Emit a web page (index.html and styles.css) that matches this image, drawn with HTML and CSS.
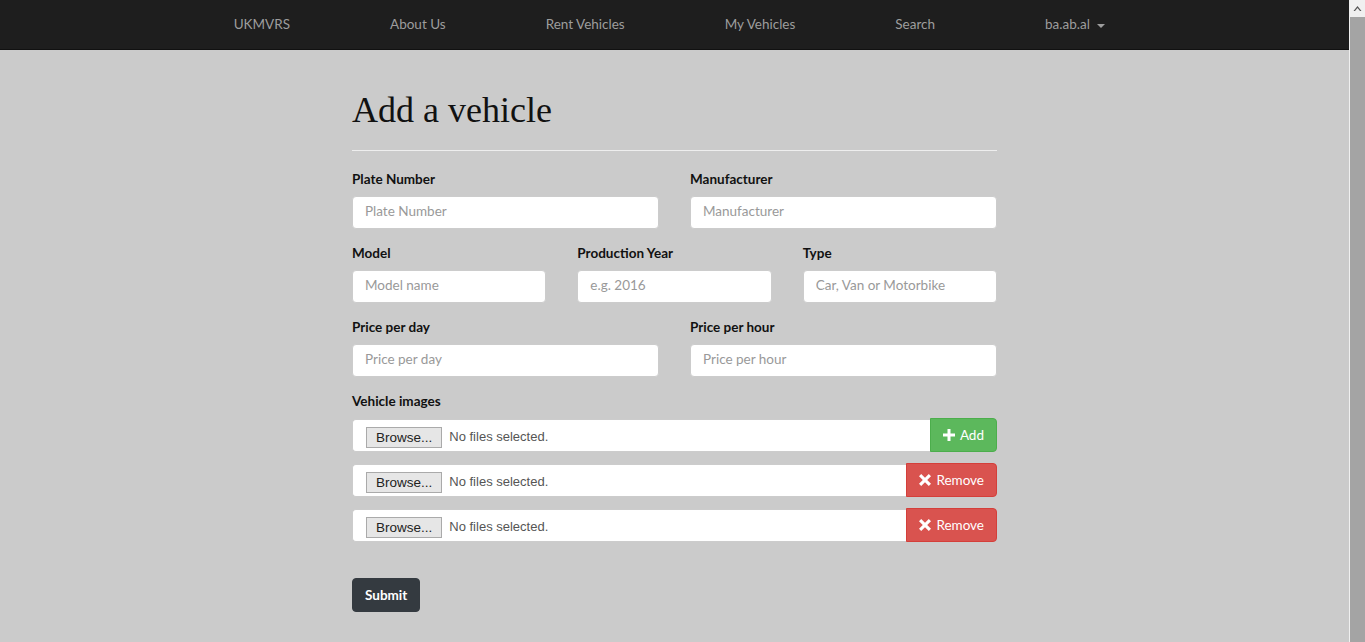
FILE: index.html
```html
<!DOCTYPE html>
<html>
<head>
<meta charset="utf-8">
<title>Add a vehicle</title>
<link rel="stylesheet" href="styles.css">
</head>
<body>
<div class="page">
  <nav class="navbar">
    <ul class="nav">
      <li><a href="#">UKMVRS</a></li>
      <li><a href="#">About Us</a></li>
      <li><a href="#">Rent Vehicles</a></li>
      <li><a href="#">My Vehicles</a></li>
      <li><a href="#">Search</a></li>
      <li class="user"><a href="#">ba.ab.al <span class="caret"></span></a></li>
    </ul>
  </nav>
  <main class="container">
    <h1 class="title">Add a vehicle</h1>
    <hr class="divider">
    <form class="form">
      <div class="row two">
        <div class="group"><label>Plate Number</label><input class="control" placeholder="Plate Number"></div>
        <div class="group"><label>Manufacturer</label><input class="control" placeholder="Manufacturer"></div>
      </div>
      <div class="row three">
        <div class="group"><label>Model</label><input class="control" placeholder="Model name"></div>
        <div class="group"><label>Production Year</label><input class="control" placeholder="e.g. 2016"></div>
        <div class="group"><label>Type</label><input class="control" placeholder="Car, Van or Motorbike"></div>
      </div>
      <div class="row two">
        <div class="group"><label>Price per day</label><input class="control" placeholder="Price per day"></div>
        <div class="group"><label>Price per hour</label><input class="control" placeholder="Price per hour"></div>
      </div>
      <div class="images">
        <label>Vehicle images</label>
        <div class="file-row">
          <div class="file"><span class="browse">Browse...</span><span class="none">No files selected.</span></div>
          <button type="button" class="btn add"><svg class="ico" viewBox="0 0 12 12"><path d="M4.5 0h3v4.5H12v3H7.5V12h-3V7.5H0v-3h4.5z" fill="#fff"/></svg>Add</button>
        </div>
        <div class="file-row">
          <div class="file"><span class="browse">Browse...</span><span class="none">No files selected.</span></div>
          <button type="button" class="btn remove"><svg class="ico" viewBox="0 0 12 12"><path d="M2.2 0L6 3.8 9.8 0 12 2.2 8.2 6 12 9.8 9.8 12 6 8.2 2.2 12 0 9.8 3.8 6 0 2.2z" fill="#fff"/></svg>Remove</button>
        </div>
        <div class="file-row">
          <div class="file"><span class="browse">Browse...</span><span class="none">No files selected.</span></div>
          <button type="button" class="btn remove"><svg class="ico" viewBox="0 0 12 12"><path d="M2.2 0L6 3.8 9.8 0 12 2.2 8.2 6 12 9.8 9.8 12 6 8.2 2.2 12 0 9.8 3.8 6 0 2.2z" fill="#fff"/></svg>Remove</button>
        </div>
      </div>
      <button type="submit" class="submit">Submit</button>
    </form>
  </main>
</div>
<div class="scrollbar" aria-hidden="true">
  <div class="sb-up"><svg viewBox="0 0 15 17" width="15" height="17"><path d="M3.5 11L7.5 6 11.5 11H10L7.5 8 5 11z" fill="#555"/></svg></div>
  <div class="sb-thumb"></div>
</div>
</body>
</html>
```
FILE: styles.css
```css
html, body {
  height: 100%;
  overflow: hidden;
}
body {
  margin: 0;
  display: flex;
  background: #cbcbcb;
  font-family: Lato, "Open Sans", sans-serif;
  font-size: 13.5px;
  line-height: 20px;
  color: #333;
}
.page {
  flex: 1;
  min-width: 0;
}
.scrollbar {
  width: 15px;
  border-left: 1px solid #f0f0f0;
  display: flex;
  flex-direction: column;
}
.sb-up {
  height: 17px;
  background: #f0f0f0;
}
.sb-up svg { display: block; }
.sb-thumb {
  flex: 1;
  background: #a4a4a4;
}
.navbar {
  background: #1e1e1e;
  height: 50px;
  border-bottom: 1px solid #111;
  box-sizing: border-box;
}
.nav {
  list-style: none;
  margin: 0;
  padding: 0 10px 0 0;
  display: flex;
  justify-content: center;
}
.nav .user { margin-left: 10px; }
.nav a {
  display: block;
  padding: 14px 50px;
  line-height: 20px;
  color: #9d9d9d;
  text-decoration: none;
}
.caret {
  display: inline-block;
  width: 0;
  height: 0;
  margin-left: 4px;
  vertical-align: middle;
  border-top: 4px solid #9d9d9d;
  border-left: 4px solid transparent;
  border-right: 4px solid transparent;
}
.container {
  width: 645px;
  margin: 0 auto;
}
.title {
  font-family: "Liberation Serif", "DejaVu Serif", serif;
  font-weight: normal;
  font-size: 36px;
  line-height: 40px;
  color: #111;
  margin: 40px 0 0;
}
.divider {
  border: 0;
  border-top: 1px solid #eee;
  margin: 20px 0 18px;
}
.row {
  display: grid;
  column-gap: 31px;
}
.row.two { grid-template-columns: 1fr 1fr; }
.row.three { grid-template-columns: 1fr 1fr 1fr; }
.group {
  margin-bottom: 14px;
}
label {
  display: block;
  font-weight: bold;
  color: #111;
  margin-bottom: 7px;
}
.control {
  display: block;
  box-sizing: border-box;
  width: 100%;
  height: 33px;
  padding: 4px 12px 7px;
  font: inherit;
  color: #555;
  background: #fff;
  border: 1px solid #ccc;
  border-radius: 4px;
  outline: none;
}
.control::placeholder { color: #999; }
.file-row {
  display: flex;
  height: 34px;
  margin-bottom: 11px;
}
.file {
  flex: 1;
  display: flex;
  align-items: center;
  background: #fff;
  border: 1px solid #ccc;
  border-right: 0;
  border-radius: 4px 0 0 4px;
  padding: 0 0 0 13px;
  height: 33px;
  box-sizing: border-box;
  margin-top: 1px;
  font-family: "Liberation Sans", Arial, sans-serif;
  font-size: 13px;
  color: #555;
}
.browse {
  display: inline-block;
  background: #e6e6e6;
  border: 1px solid #aaa;
  color: #222;
  font-size: 13.5px;
  padding: 0 9px;
  height: 19px;
  line-height: 19px;
  margin-right: 7px;
  margin-top: 3px;
}
.none { margin-top: 3px; }
.btn {
  display: flex;
  align-items: center;
  gap: 5px;
  height: 34px;
  padding: 0 12px;
  border: 1px solid;
  border-radius: 0 4px 4px 0;
  color: #fff;
  font: inherit;
}
.ico { width: 12px; height: 12px; }
.add { background: #5cb85c; border-color: #4cae4c; }
.remove { background: #d9534f; border-color: #d43f3a; }
.submit {
  margin-top: 25px;
  background: #343a40;
  border: 1px solid #343a40;
  color: #fff;
  font: inherit;
  font-weight: bold;
  height: 34px;
  padding: 0 12px;
  border-radius: 4px;
}
```
